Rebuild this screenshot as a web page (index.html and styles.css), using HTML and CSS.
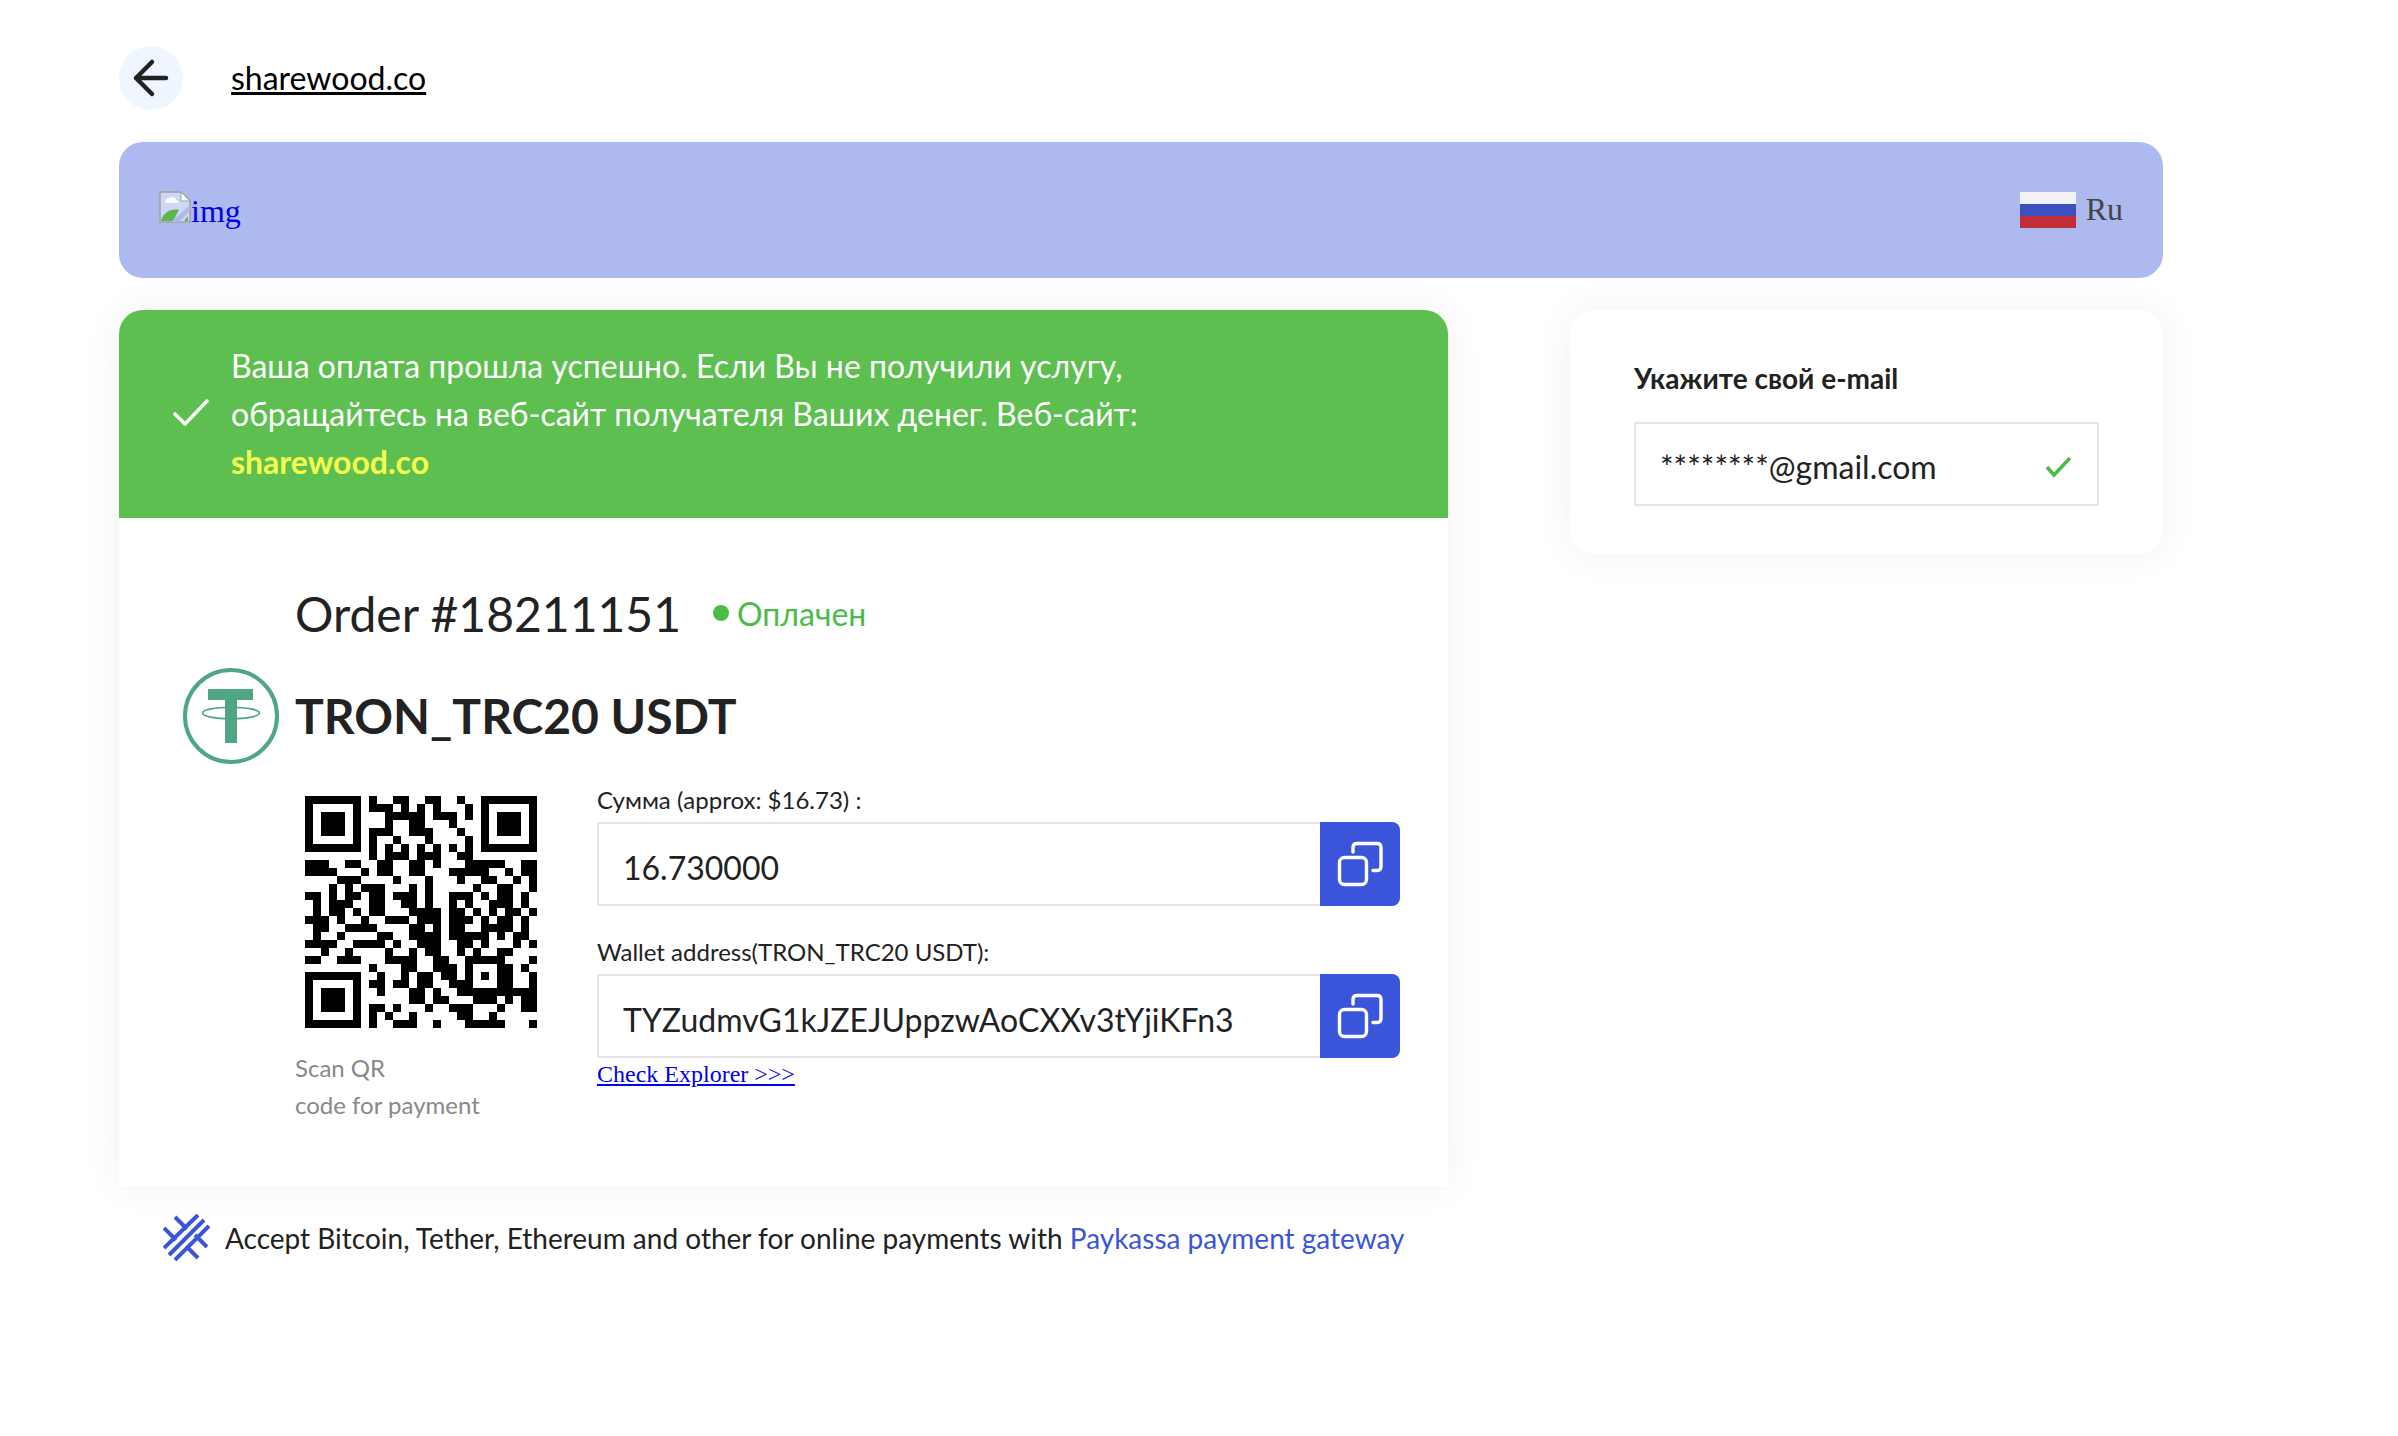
FILE: index.html
```html
<!DOCTYPE html>
<html lang="ru">
<head>
<meta charset="utf-8">
<title>Order #18211151</title>
<link rel="stylesheet" href="styles.css">
</head>
<body>
<div class="page">
  <header class="top">
    <a class="back" href="#"><svg width="64" height="64" viewBox="0 0 64 64"><path d="M17 32h30M33 16 17 32l16 16" fill="none" stroke="#222" stroke-width="4.5" stroke-linecap="round" stroke-linejoin="round"/></svg></a>
    <a class="site" href="#">sharewood.co</a>
  </header>

  <div class="banner">
    <a class="broken" href="#"><svg class="broken-icon" width="32" height="32" viewBox="0 0 32 32"><path d="M1 1h21l9 9v21H1z" fill="#cdd8f4" stroke="#a0a0a0" stroke-width="1.5"/><path d="M22 1v9h9z" fill="#fff" stroke="#a0a0a0"/><path d="M6 11c0-3 3-4 5-4 2-2 6-1 6 2 3 0 3 3 1 3H7z" fill="#fff"/><path d="M2 30c2-8 10-13 18-11l-6 11zM25 30l4-5v5z" fill="#5db64e"/><path d="M12 31 31 14v6L20 31z" fill="#aeb9ee"/></svg>img</a>
    <div class="lang">
      <span class="flag"><i class="flag-w"></i><i class="flag-b"></i><i class="flag-r"></i></span>
      <span>Ru</span>
    </div>
  </div>

  <div class="columns">
    <section class="card">
      <div class="success">
        <svg class="success-check" width="38" height="28" viewBox="0 0 38 28"><path d="M2 15 13 26 36 2" fill="none" stroke="#fff" stroke-width="3.4"/></svg>
        <p class="success-text">Ваша оплата прошла успешно. Если Вы не получили услугу, обращайтесь на веб-сайт получателя Ваших денег. Веб-сайт: <b class="success-link">sharewood.co</b></p>
      </div>
      <div class="body">
        <div class="order-row">
          <h2 class="order">Order #18211151</h2>
          <span class="status"><i class="dot"></i>Оплачен</span>
        </div>
        <div class="coin-row">
          <svg class="coin" width="96" height="96" viewBox="0 0 96 96"><circle cx="48" cy="48" r="46" fill="#fff" stroke="#50a583" stroke-width="4"/><path d="M25 21h45v11H54v43H42V32H25z" fill="#50a583"/><ellipse cx="48" cy="45" rx="28.5" ry="5.8" fill="none" stroke="#50a583" stroke-width="1.6"/></svg>
          <h1 class="coin-name">TRON_TRC20 USDT</h1>
        </div>
        <div class="pay">
          <div class="qr-col">
            <svg class="qr" width="232" height="232" viewBox="0 0 29 29">
              <path fill-rule="evenodd" d="M0 0h7v7H0zM1 1v5h5V1zM2 2h3v3H2zM22 0h7v7h-7zM23 1v5h5V1zM24 2h3v3h-3zM0 22h7v7H0zM1 23v5h5v-5zM2 24h3v3H2z"/>
              <path fill="none" stroke="#000" d="M8 .5h1M11 .5h2M15 .5h2M19 .5h1
                M8 1.500h3M12 1.500h1M14 1.500h1M16 1.500h1M20 1.500h1
                M10 2.500h5M16 2.500h3M20 2.500h1
                M10 3.500h1M13 3.500h2M18 3.500h1
                M8 4.500h3M13 4.500h3M19 4.500h1
                M8 5.500h1M11 5.500h1M15 5.500h1M20 5.500h1
                M8 6.500h1M10 6.500h1M12 6.500h1M14 6.500h1M16 6.500h1M18 6.500h1M20 6.500h1
                M8 7.500h1M10 7.500h3M14 7.500h3M19 7.500h2
                M0 8.500h3M5 8.500h2M9 8.500h2M13 8.500h2M16 8.500h1M20 8.500h5M27 8.500h2
                M0 9.500h4M7 9.500h1M9 9.500h2M13 9.500h2M18 9.500h5M25 9.500h1M27 9.500h2
                M4 10.500h3M11 10.500h1M15 10.500h1M19 10.500h1M22 10.500h2M26 10.500h1M28 10.500h1
                M3 11.500h1M5 11.500h1M7 11.500h3M13 11.500h1M15 11.500h1M21 11.500h1M24 11.500h2M28 11.500h1
                M0 12.500h2M3 12.500h1M5 12.500h2M8 12.500h2M11 12.500h3M15 12.500h1M18 12.500h3M22 12.500h1M24 12.500h2M27 12.500h1
                M1 13.500h1M3 13.500h3M8 13.500h2M12 13.500h2M15 13.500h1M18 13.500h1M20 13.500h1M23 13.500h3M27 13.500h1
                M1 14.500h1M3 14.500h2M6 14.500h1M8 14.500h2M13 14.500h4M18 14.500h2M21 14.500h1M23 14.500h1M25 14.500h2M28 14.500h1
                M0 15.500h3M4 15.500h1M7 15.500h1M10 15.500h3M14 15.500h3M18 15.500h3M22 15.500h1M24 15.500h2M27 15.500h1
                M1 16.500h2M5 16.500h4M13 16.500h2M16 16.500h1M18 16.500h2M22 16.500h4M27 16.500h1
                M1 17.500h1M4 17.500h1M9 17.500h2M13 17.500h4M18 17.500h5M24 17.500h1M26 17.500h2
                M0 18.500h4M6 18.500h4M11 18.500h1M14 18.500h3M19 18.500h2M22 18.500h1M26 18.500h1M28 18.500h1
                M2 19.500h1M5 19.500h1M10 19.500h1M13 19.500h1M15 19.500h2M19 19.500h1M21 19.500h1M24 19.500h2
                M0 20.500h2M4 20.500h3M10 20.500h4M16 20.500h2M20 20.500h5M28 20.500h1
                M8 21.500h1M12 21.500h2M16 21.500h3M20 21.500h1M24 21.500h2M27 21.500h1
                M9 22.500h1M12 22.500h1M14 22.500h2M17 22.500h2M20 22.500h1M22 22.500h1M24 22.500h2M28 22.500h1
                M8 23.500h2M11 23.500h2M14 23.500h2M18 23.500h3M24 23.500h2M28 23.500h1
                M9 24.500h1M13 24.500h2M16 24.500h1M19 24.500h10
                M13 25.500h2M16 25.500h2M21 25.500h3M25 25.500h1M27 25.500h2
                M8 26.500h2M11 26.500h1M15 26.500h1M18 26.500h3M24 26.500h1M27 26.500h2
                M8 27.500h1M10 27.500h1M13 27.500h1M19 27.500h2M23 27.500h1
                M8 28.500h1M11 28.500h3M16 28.500h1M20 28.500h5M28 28.500h1"/>
            </svg>
            <p class="qr-note">Scan QR<br>code for payment</p>
          </div>
          <div class="fields">
            <label class="label">Сумма (approx: $16.73) :</label>
            <div class="field">
              <div class="value">16.730000</div>
              <button class="copy"><svg width="80" height="84" viewBox="0 0 80 84"><rect x="19.500" y="35.500" width="27" height="27" rx="5" fill="none" stroke="#fff" stroke-width="3.400"/><path d="M33 30v-4.500q0-4 4-4h20q4 0 4 4v19q0 4-4 4h-4" fill="none" stroke="#fff" stroke-width="3.400" stroke-linecap="round"/></svg></button>
            </div>
            <label class="label label-second">Wallet address(TRON_TRC20 USDT):</label>
            <div class="field">
              <div class="value">TYZudmvG1kJZEJUppzwAoCXXv3tYjiKFn3</div>
              <button class="copy"><svg width="80" height="84" viewBox="0 0 80 84"><rect x="19.500" y="35.500" width="27" height="27" rx="5" fill="none" stroke="#fff" stroke-width="3.400"/><path d="M33 30v-4.500q0-4 4-4h20q4 0 4 4v19q0 4-4 4h-4" fill="none" stroke="#fff" stroke-width="3.400" stroke-linecap="round"/></svg></button>
            </div>
            <a class="explorer" href="#">Check Explorer &gt;&gt;&gt;</a>
          </div>
        </div>
      </div>
    </section>

    <aside class="email">
      <h3 class="email-title">Укажите свой e-mail</h3>
      <div class="email-field">
        <span>********@gmail.com</span>
        <svg width="28" height="22" viewBox="0 0 28 22"><path d="M2 11 9 19 25 2" fill="none" stroke="#4dbb4a" stroke-width="3.600"/></svg>
      </div>
    </aside>
  </div>

  <footer class="foot">
    <svg class="foot-logo" width="47" height="47" viewBox="0 0 47 47"><path d="M1 34 35 1M12 46 46 12M6 41 41 6M1 14l12 12M12 3l12 12M23 32l12 12M32 21l12 12" fill="none" stroke="#3a55d9" stroke-width="4"/></svg>
    <span>Accept Bitcoin, Tether, Ethereum and other for online payments with <a class="foot-link" href="#">Paykassa payment gateway</a></span>
  </footer>
</div>
</body>
</html>
```
FILE: styles.css
```css
* { box-sizing: border-box; }
html, body { margin: 0; background: #fff; }
body { font-family: Lato, "Noto Sans", sans-serif; color: #222; }
p, h1, h2, h3 { margin: 0; }
.page { width: 2044px; margin-left: 119px; padding-top: 46px; }

.top { display: flex; align-items: center; gap: 48px; height: 64px; }
.back { display: block; width: 64px; height: 64px; border-radius: 50%; background: #eff6ff; }
.back svg { display: block; }
.site { margin-top: -1px; font-size: 32px; color: #000; text-decoration: underline; }

.banner { display: flex; align-items: center; justify-content: space-between; height: 136px; margin-top: 32px; padding: 0 40px; background: #adb9ef; border-radius: 24px; }
.broken { display: flex; align-items: flex-start; padding-top: 2px; font-family: "Liberation Serif", serif; font-size: 32px; line-height: 40px; color: #00e; text-decoration: none; }
.broken-icon { display: block; }
.lang { display: flex; align-items: center; gap: 10px; font-family: "Liberation Serif", serif; font-size: 32px; color: #444; }
.lang span:last-child { margin-top: -1px; }
.flag { display: flex; flex-direction: column; width: 56px; height: 37px; }
.flag i { display: block; flex: 1; }
.flag-w { background: #f2f2f4; }
.flag-b { background: #3d50c0; }
.flag-r { background: #c22e38; }

.columns { display: flex; align-items: flex-start; justify-content: space-between; margin-top: 32px; }
.card { width: 1329px; height: 876px; background: #fff; border-radius: 24px 24px 0 0; box-shadow: 0 0 40px rgba(0, 0, 0, .06); }
.success { display: flex; align-items: center; height: 208px; padding-left: 53px; gap: 21px; background: #5cbf4f; border-radius: 24px 24px 0 0; }
.success-check { flex: none; margin-top: -4px; }
.success-text { width: 930px; font-size: 32px; line-height: 48px; color: #fff; }
.success-link { color: #f6ff50; font-weight: 700; }

.body { padding: 59px 0 0 64px; }
.order-row { display: flex; align-items: center; gap: 32px; height: 72px; padding-left: 112px; }
.order { font-size: 48px; font-weight: 400; color: #222; }
.status { display: flex; align-items: center; gap: 8px; font-size: 32px; color: #4dbb4a; }
.dot { display: block; width: 16px; height: 16px; border-radius: 50%; background: #4dbb4a; }
.coin-row { display: flex; align-items: center; gap: 16px; margin-top: 19px; }
.coin { display: block; flex: none; }
.coin-name { margin-top: -2px; font-size: 48px; font-weight: 700; color: #222; }

.pay { display: flex; margin-top: 20px; padding-left: 112px; }
.qr-col { width: 302px; flex: none; padding-top: 12px; }
.qr { display: block; margin-left: 10px; }
.qr-note { margin-top: 21px; font-size: 24px; line-height: 37px; color: #888; }
.fields { width: 803px; }
.label { display: block; height: 38px; font-size: 24px; line-height: 32px; color: #222; }
.label-second { margin-top: 30px; }
.field { display: flex; height: 84px; }
.value { flex: 1; display: flex; align-items: center; padding: 6px 0 0 24px; border: 2px solid #e5e5e5; border-right-width: 0; font-size: 32px; color: #222; }
.copy { display: block; flex: none; width: 80px; height: 84px; padding: 0; border: 0; border-radius: 0 8px 8px 0; background: #3a55d9; }
.copy svg { display: block; }
.explorer { display: block; margin-top: 3px; font-family: "Liberation Serif", serif; font-size: 24px; color: #00e; }

.email { width: 593px; height: 244px; padding: 49px 64px 0; background: #fff; border-radius: 24px; box-shadow: 0 0 40px rgba(0, 0, 0, .06); }
.email-title { font-size: 28px; font-weight: 700; line-height: 38px; color: #222; }
.email-field { display: flex; align-items: center; justify-content: space-between; height: 84px; margin-top: 25px; padding: 5px 24px 0 24px; border: 2px solid #e5e5e5; font-size: 32px; color: #222; }

.foot { display: flex; align-items: center; gap: 15px; margin-top: 28px; padding-left: 44px; font-size: 28px; color: #222; }
.foot-logo { display: block; flex: none; }
.foot-link { color: #3a55d9; text-decoration: none; }
```
